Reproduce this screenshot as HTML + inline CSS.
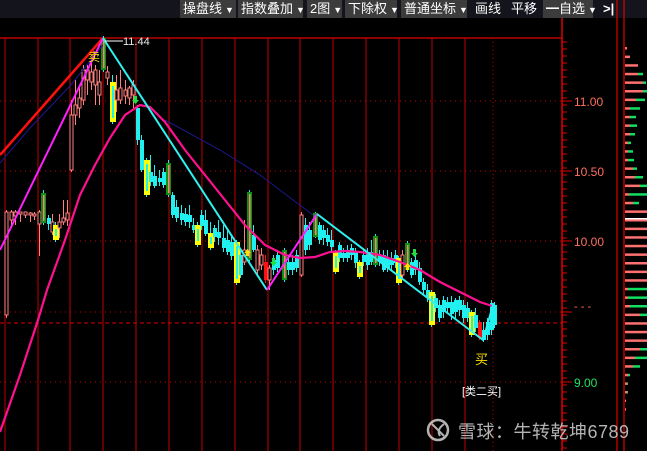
<!DOCTYPE html>
<html><head><meta charset="utf-8">
<style>
html,body{margin:0;padding:0;background:#000;width:647px;height:451px;overflow:hidden}
body{position:relative;font-family:"Liberation Sans","Noto Sans CJK SC",sans-serif}
.tb{position:absolute;top:0;left:0;width:647px;height:18px;background:#14141c}
.b{position:absolute;top:0;height:18px;background:#3c3c3c;color:#fff;font-size:13px;line-height:18px;padding-left:3px;box-sizing:border-box;white-space:nowrap}
.b i{font-style:normal;font-size:9px;margin-left:3px}
.p{position:absolute;top:0;height:18px;color:#fff;font-size:13px;line-height:18px}
svg{position:absolute;left:0;top:0}
.wm{position:absolute;left:458px;top:418px;color:rgba(210,210,210,0.85);font-size:18px;letter-spacing:0.5px;font-family:"Liberation Sans","Noto Sans CJK SC",sans-serif}
</style></head><body>
<div class="tb"></div>
<div class="b" style="left:180px;width:56px">操盘线<i>▼</i></div>
<div class="b" style="left:238px;width:65px">指数叠加<i>▼</i></div>
<div class="b" style="left:307px;width:35px">2图<i>▼</i></div>
<div class="b" style="left:345px;width:52px">下除权<i>▼</i></div>
<div class="b" style="left:401px;width:66px">普通坐标<i>▼</i></div>
<div class="p" style="left:475px">画线</div>
<div class="p" style="left:511px">平移</div>
<div class="b" style="left:543px;width:50px">━自选<i>▼</i></div>
<div class="p" style="left:603px;font-weight:bold">&gt;|</div>
<svg id="s" width="647" height="451" xmlns="http://www.w3.org/2000/svg">
<g stroke="#a00000" stroke-width="1.2" id="vg"></g>
<g stroke="#c00000" stroke-width="1" stroke-dasharray="1,4">
<line x1="0" y1="101" x2="562" y2="101"/><line x1="0" y1="171" x2="562" y2="171"/>
<line x1="0" y1="241" x2="562" y2="241"/><line x1="0" y1="312" x2="562" y2="312"/>
<line x1="0" y1="382" x2="562" y2="382"/>
</g>
<line x1="0" y1="323" x2="562" y2="323" stroke="#e00000" stroke-dasharray="4,3"/>
<line x1="0" y1="38" x2="562" y2="38" stroke="#e00000" stroke-width="1.2"/>
<line x1="562" y1="18" x2="562" y2="451" stroke="#e00000" stroke-width="1.5"/>
<line x1="617" y1="0" x2="617" y2="451" stroke="#e00000" stroke-width="1.2"/>
<line x1="624" y1="0" x2="624" y2="451" stroke="#e00000" stroke-width="1.2"/>
<g id="tk" stroke="#e00000"></g>
<g font-size="12" fill="#ff7060" font-family="Liberation Sans,sans-serif">
<text x="574" y="106">11.00</text><text x="574" y="176">10.50</text><text x="574" y="246">10.00</text>
</g>
<text x="574" y="310" fill="#ff7060" font-size="11">-  - -</text>
<text x="574" y="387" fill="#22e060" font-size="12">9.00</text>
<g id="cd"></g>
<polyline points="0,163 30,128 70,86 103,45" fill="none" stroke="#1a1a90" stroke-width="1"/>
<polyline points="165,120 220,150 260,175 313,215" fill="none" stroke="#1a1a90" stroke-width="1"/>
<line x1="0" y1="155" x2="103" y2="38" stroke="#ff1010" stroke-width="2.5"/>
<line x1="0" y1="250" x2="103" y2="38" stroke="#ff20ff" stroke-width="2"/>
<polyline points="0,432 20,375 38,320 47,290 65,240 80,195 95,165 110,138 125,115 140,105 150,107 165,122 185,150 205,175 225,200 245,225 265,245 285,255 300,258 315,257 330,252 345,251 360,252 380,255 400,262 420,270 440,282 460,292 480,302 492,306" fill="none" stroke="#ff1090" stroke-width="2.2"/>
<polyline points="103,38 267,290" fill="none" stroke="#30f0f0" stroke-width="2"/>
<polyline points="267,290 317,214" fill="none" stroke="#ff20ff" stroke-width="2"/>
<polyline points="317,214 483,340 493,305" fill="none" stroke="#30f0f0" stroke-width="2"/>
<line x1="105" y1="41" x2="123" y2="41" stroke="#fff"/>
<text x="123" y="45" fill="#e8e8e8" font-size="11">11.44</text>
<text x="88" y="61" fill="#ffe000" font-size="12" font-family="Noto Sans CJK SC,sans-serif">卖</text>
<text x="475" y="364" fill="#ffe000" font-size="13" font-family="Noto Sans CJK SC,sans-serif">买</text>
<text x="462" y="395" fill="#ffffff" font-size="11" font-family="Liberation Sans,Noto Sans CJK SC,sans-serif">[类二买]</text>
<g fill="#20e040"><path d="M132,100h7l-3.5,4z"/><rect x="134" y="96" width="3" height="4"/>
<path d="M270,262h7l-3.5,4z"/><rect x="272" y="258" width="3" height="4"/>
<path d="M411,253h7l-3.5,4z"/><rect x="413" y="249" width="3" height="4"/></g>
<g fill="#ffe000"><path d="M244,253h7l-3.5,-4z"/><rect x="246" y="253" width="3" height="3"/>
<path d="M404,267h7l-3.5,-4z"/><rect x="406" y="267" width="3" height="3"/></g>
<g id="vol"></g>
<circle cx="438" cy="430" r="10" fill="none" stroke="rgba(210,210,210,0.85)" stroke-width="2.5"/>
<path d="M432,424 L444,436 M444,424 Q436,430 440,436" fill="none" stroke="rgba(210,210,210,0.85)" stroke-width="2"/>
</svg>
<div class="wm">雪球：牛转乾坤6789</div>
<script>
var NS="http://www.w3.org/2000/svg";
function el(p,t,a){var e=document.createElementNS(NS,t);for(var k in a)e.setAttribute(k,a[k]);document.getElementById(p).appendChild(e);}
[5,38,70,103,136,169,202,235,268,300,333,366,399,432,465].forEach(function(x){el("vg","line",{x1:x,y1:38,x2:x,y2:451});});
el("vg","line",{x1:493,y1:38,x2:493,y2:451,"stroke-dasharray":"1,3"});
for(var y=42;y<451;y+=7){el("tk","line",{x1:562,y1:y,x2:567,y2:y});}
[101,171,241,312,382].forEach(function(y){el("tk","line",{x1:562,y1:y,x2:572,y2:y});});
// candles: x, top, bottom, wtop, wbot, type (u=up salmon, d=down cyan, y=yellow, g=green, r=red)
var C=[[5,212,315,210,318,'u'],[10,212,220,210,228,'u'],[14,212,216,210,225,'u'],[19,212,214,212,222,'u'],[24,212,215,212,218,'u'],[29,213,215,212,222,'u'],[33,214,216,212,220,'u'],[38,212,224,210,256,'u'],[42,193,223,190,225,'g'],[47,218,224,215,230,'d'],[51,222,232,214,235,'u'],[54,225,240,222,242,'y'],[58,222,228,214,238,'u'],[62,218,222,200,225,'u'],[66,213,220,200,226,'u'],[70,115,170,100,172,'u'],[74,105,115,80,125,'u'],[78,98,108,85,118,'u'],[82,70,100,65,105,'u'],[86,70,80,65,95,'u'],[90,72,82,62,90,'u'],[94,70,85,65,105,'u'],[98,82,95,70,105,'u'],[102,38,70,36,72,'g'],[106,72,78,66,85,'u'],[111,82,122,75,124,'y'],[115,90,100,75,112,'u'],[119,88,100,70,104,'u'],[124,90,96,80,104,'u'],[128,88,98,86,105,'u'],[132,85,95,80,108,'u'],[136,108,140,105,145,'d'],[140,140,170,135,172,'d'],[145,160,195,158,197,'y'],[149,172,182,155,186,'d'],[153,176,186,165,188,'d'],[158,178,182,170,186,'d'],[162,172,185,168,188,'d'],[167,163,195,160,197,'g'],[171,195,215,192,218,'d'],[175,207,218,200,222,'d'],[180,213,220,205,225,'d'],[184,214,222,208,226,'d'],[188,215,222,205,228,'d'],[192,225,230,218,233,'d'],[196,225,245,222,247,'y'],[200,215,226,210,230,'d'],[204,220,234,210,236,'d'],[209,233,248,222,250,'y'],[213,228,237,225,242,'d'],[217,232,238,220,245,'d'],[222,238,248,225,252,'d'],[226,240,252,230,255,'d'],[230,242,256,235,260,'d'],[235,242,283,240,285,'y'],[239,255,275,248,278,'d'],[243,250,262,220,265,'u'],[248,192,260,190,262,'g'],[252,235,250,225,252,'d'],[256,250,270,245,275,'u'],[260,255,265,248,270,'u'],[264,262,280,255,283,'r'],[268,268,280,265,290,'u'],[272,260,270,255,275,'d'],[276,255,268,250,272,'d'],[283,250,280,248,282,'g'],[287,262,270,258,275,'d'],[291,262,270,255,275,'d'],[295,255,268,250,272,'d'],[300,215,275,212,277,'u'],[304,225,250,218,255,'d'],[308,230,245,222,250,'d'],[314,213,237,212,238,'g'],[318,225,240,222,244,'d'],[322,230,238,225,245,'d'],[326,235,242,228,246,'d'],[330,240,247,230,252,'d'],[334,252,272,250,274,'y'],[338,245,258,242,262,'d'],[342,253,258,248,262,'d'],[346,250,258,245,262,'d'],[350,248,255,244,260,'d'],[354,252,263,248,268,'d'],[358,262,277,260,279,'y'],[362,255,262,250,266,'d'],[366,252,265,248,270,'d'],[370,252,262,240,265,'d'],[374,236,265,234,267,'g'],[378,255,262,250,266,'d'],[382,255,270,250,272,'d'],[386,258,268,250,272,'d'],[390,258,265,252,270,'d'],[394,255,263,250,268,'d'],[397,258,283,256,285,'y'],[401,255,275,250,278,'u'],[406,243,270,241,272,'g'],[410,262,275,258,278,'d'],[414,260,270,255,275,'d'],[418,268,282,262,285,'d'],[422,282,290,278,295,'d'],[426,290,298,284,302,'d'],[430,292,325,290,327,'y'],[434,298,308,294,312,'d'],[438,305,318,300,322,'d'],[442,300,312,296,318,'d'],[446,302,308,297,314,'d'],[450,302,314,296,320,'d'],[454,300,312,298,318,'d'],[458,300,310,296,316,'d'],[462,305,318,300,323,'d'],[466,308,318,302,322,'d'],[470,312,335,310,337,'y'],[474,315,328,308,332,'d'],[478,322,338,320,340,'r'],[482,330,340,322,342,'d'],[486,322,335,318,340,'d'],[490,303,330,300,335,'d'],[493,305,325,302,328,'d']];
C.forEach(function(c){var x=c[0],t=c[5];
 var col={u:'#ff8080',d:'#20f0f0',y:'#ffff00',g:'#109010',r:'#ff1010'}[t];
 el("cd","line",{x1:x+1.5,y1:c[3],x2:x+1.5,y2:c[4],stroke:t=='y'||t=='g'?'#20f0f0':col});
 if(t=='u')el("cd","rect",{x:x,y:c[1],width:3,height:c[2]-c[1],fill:'#000',stroke:col,"stroke-width":1});
 else if(t=='g'){el("cd","rect",{x:x-1,y:c[1],width:5,height:c[2]-c[1],fill:col});el("cd","rect",{x:x+1,y:c[1]+2,width:1.5,height:c[2]-c[1]-4,fill:'#ff8080'});}
 else if(t=='y'){el("cd","rect",{x:x-1,y:c[1],width:6,height:c[2]-c[1],fill:col});el("cd","rect",{x:x+1,y:c[1]+4,width:2,height:c[2]-c[1]-8,fill:'#20f0f0'});}
 else el("cd","rect",{x:x,y:c[1],width:4,height:c[2]-c[1],fill:col});
});
// volume bars
var V=[[2,0],[5,0],[13,0],[13,5],[18,3],[18,4],[11,9],[5,10],[5,6],[5,7],[5,5],[3,3],[3,5],[3,6],[8,4],[10,8],[15,8],[4,18],[8,6],[23,0],[23,0],[23,0],[23,0],[23,0],[23,0],[23,0],[23,0],[23,0],[3,20],[3,20],[5,18],[15,8],[23,0],[23,0],[23,0],[15,8],[10,13],[8,7],[3,2],[2,1],[2,1],[1,0],[1,0]];
var y=47;V.forEach(function(v){el("vol","rect",{x:625,y:y,width:v[0],height:2.5,fill:'#ff7070'});if(v[1])el("vol","rect",{x:625+v[0],y:y,width:v[1],height:2.5,fill:'#10e060'});y+=8.6;});
el("vol","rect",{x:625,y:218,width:22,height:1.5,fill:'#fff'});
</script>
</body></html>
